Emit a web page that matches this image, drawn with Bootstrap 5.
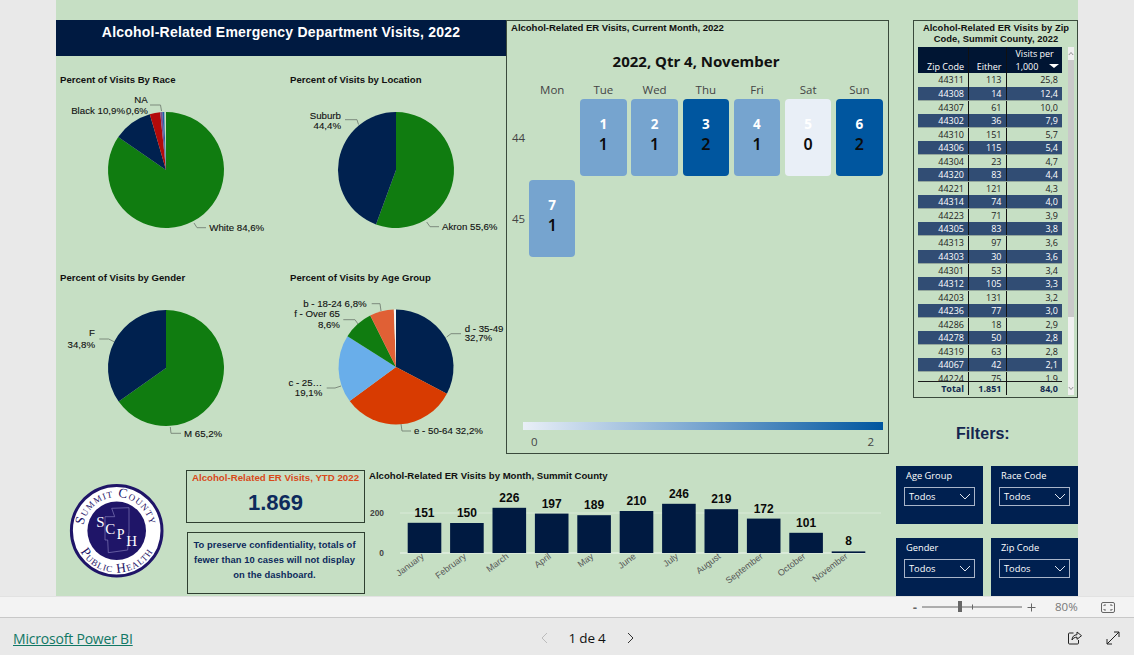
<!DOCTYPE html>
<html lang="en">
<head>
<meta charset="utf-8">
<title>Alcohol-Related Emergency Department Visits, 2022</title>
<link href="https://cdn.jsdelivr.net/npm/bootstrap@5.3.0/dist/css/bootstrap.min.css" rel="stylesheet">
<style>
html,body{height:655px;overflow:hidden;background:#e9e9e9}
body{font-family:"Liberation Sans",Arial,sans-serif;color:#000}
.stage{height:596px;overflow:hidden;padding-left:56px}
.report{width:1022px;height:596px;background:#c6dfc4;overflow:hidden}
.left-part{width:833px}
.upper-row{height:466px}
.left-col{width:450px;padding-top:20px}
.main-title{height:36px;background:#001a41;color:#fff;font-size:14px;font-weight:700;text-align:center;padding-top:3px;line-height:18px;letter-spacing:.22px}
.pie-row{height:198px}
.pie-cell{padding-top:17px}
.pie-a{width:230px}
.pie-b{width:220px}
.vis-title{font-size:9.6px;font-weight:700;line-height:12px;height:12px;padding:1px 0 0 4px;color:#111;white-space:nowrap}
.pie-svg{display:block;overflow:visible}
.pie-svg text{font-size:9.7px;fill:#111;stroke:#111;stroke-width:.12px;font-family:"Liberation Sans",Arial,sans-serif}
.pie-svg polyline{fill:none;stroke:#7d8b7d;stroke-width:1}
.cal-box{width:383px;height:434px;margin-top:20px;border:1px solid #3a4a3c;position:relative}
.cal-title{font-size:9.6px;font-weight:700;padding:1px 0 0 4px;line-height:12px;color:#111;letter-spacing:-.05px}
.cal-heading{font-family:"Noto Sans",sans-serif;font-size:15px;font-weight:700;text-align:center;line-height:20px;margin-top:17px;padding-right:3px;color:#111}
.cal-grid{display:grid;grid-template-columns:17.3px repeat(7,46.5px);column-gap:4.7px;grid-template-rows:20px 76.2px 76.2px;row-gap:4.8px;margin-top:3.700px;height:178px}
.wk-head{font-family:"Open Sans",sans-serif;font-size:11.5px;color:#444;text-align:center;line-height:20px;padding-top:5px;height:20px}
.wk-num{font-family:"Open Sans",sans-serif;font-size:11.5px;color:#444;padding-left:5px;align-self:center}
.day{border-radius:4px;display:flex;flex-direction:column;align-items:center;justify-content:center;font-weight:700;padding-bottom:7px}
.day-n{color:#fff;font-size:13.5px;line-height:20px;font-family:"Noto Sans",sans-serif}
.day-v{color:#0b0b0b;font-size:16px;line-height:20px;font-family:"Noto Sans",sans-serif;font-weight:600}
.lvl-1{background:#76a4cf}.lvl-2{background:#00569f}.lvl-0{background:#e9eff7}
.legend{position:absolute;left:16px;right:5px;top:401px}
.legend-bar{height:8px;background:linear-gradient(90deg,#e9eff7,#76a4cf 50%,#00569f)}
.legend-txt{font-family:"Open Sans",sans-serif;font-size:11.5px;color:#444;padding:4px 9px 0 8px;line-height:16px}
.lower-row{height:130px}
.logo-col{width:130px}
.logo-svg{display:block}
.kpi-col{width:179px}
.kpi-box{height:53px;margin-top:4px;border:1px solid #2e3f30;text-align:center}
.kpi-label{color:#d84a1a;font-size:9.7px;font-weight:700;line-height:12px;padding-top:1px;white-space:nowrap}
.kpi-value{color:#0d2a5c;font-size:22px;font-weight:700;line-height:26px;margin-top:6px}
.note-box{height:62px;margin:9px 0 0 1px;border:1px solid #2e3f30;color:#0d2a5c;font-size:9.4px;font-weight:700;line-height:15px;text-align:center;padding:4px 3px 0 0;letter-spacing:.07px}
.bar-col{width:524px}
.bar-title{font-size:9.6px;font-weight:700;line-height:20px;padding-left:4px;color:#111}
.bar-svg{display:block;overflow:visible}
.bar-svg .val{font-size:12px;font-weight:700;fill:#0a0a0a;text-anchor:middle}
.bar-svg .ax{font-size:8.4px;font-weight:700;fill:#444;text-anchor:end}
.bar-svg .mon{font-size:9px;fill:#555;text-anchor:end}
.right-part{width:189px}
.zip-box{width:165px;height:378px;margin:20px 0 0 24px;border:1px solid #3a4a3c;padding:0 3px 0 4px;background:#c6dfc4}
.zip-title{font-size:9.4px;font-weight:700;line-height:10.6px;text-align:center;padding-top:2px;height:26px;color:#111;letter-spacing:.05px}
.zip-main{width:144px}
.zip-scroll{height:334px;overflow:hidden}
.zip-tbl{width:144px;table-layout:fixed;border-collapse:collapse;font-family:"Open Sans",sans-serif;font-size:9px;--bs-table-bg:transparent;--bs-table-color:#222;margin:0}
.zip-tbl th,.zip-tbl td{padding:1px 4px 0 0;border:0;border-right:1px solid #111;text-align:right;line-height:12px;box-shadow:none;background:transparent;color:#222;font-weight:400}
.zip-tbl th:last-child,.zip-tbl td:last-child{border-right:0}
.zip-tbl thead th{background:#001533;color:#fff;height:26px;vertical-align:bottom;padding:0 4px 0 0;font-weight:400;white-space:nowrap}
.zip-tbl tbody tr{height:13.59px}
.zip-tbl tbody tr:nth-child(even) td{background:#314d74;color:#fff;border-bottom:1px solid #93a79c}
.zip-tbl .c1{width:50.5px}
.zip-tbl .c2{width:37.5px}
.zip-tbl .zip-head-3{text-align:left;padding:0 0 0 9px;line-height:12.5px}
.sort-tri{display:inline-block;width:0;height:0;border-left:5px solid transparent;border-right:5px solid transparent;border-top:4px solid #fff;margin-left:11px;vertical-align:2px}
.zip-total{border-top:1px solid #1b1b1b;height:13px}
.zip-total tbody tr{height:13px}
.zip-total td{font-weight:700!important;color:#13294f!important;line-height:11px}
.zip-bar{width:6px;margin-left:6px;height:348px;background:#f0f0f0}
.zip-arrow{height:13px;flex:none}
.zip-thumb{height:257px;background:#c9c9c9}
.filters-h{font-size:16px;font-weight:700;color:#14264f;padding-left:67px;line-height:20px;margin-top:26px;letter-spacing:.05px}
.filter-grid{display:grid;grid-template-columns:87px 87px;column-gap:8px;row-gap:14.5px;margin:22px 0 0 7px}
.filter-tile{height:57.5px;background:#002050;padding:4px 8px 0 8px;color:#fff;font-family:"Open Sans",sans-serif;font-size:9.3px}
.filter-name{line-height:12px;padding-left:2px;white-space:nowrap}
.filter-select{height:19px;margin-top:5px;border:1px solid #a9b5c9;padding:0 3px 0 4px;line-height:16px}
.status-bar{height:22px;background:#f3f3f3;border-top:1px solid #e2e2e2;border-bottom:1px solid #c8c8c8;padding-right:19px;color:#666}
.zoom-minus{font-size:13px;line-height:1;font-weight:700;color:#666;width:8px;margin-right:2px}
.zoom-pct{font-family:"Open Sans",sans-serif;font-size:11.5px;color:#777;width:23px;margin-left:19px}
.foot-bar{height:37px;background:#e9e9e9;padding:3px 14px 0 13px}
.foot-link{width:528px;font-family:"Open Sans",sans-serif;font-size:14px;letter-spacing:-.2px;color:#117865;text-decoration:underline}
.pager-txt{font-family:"Open Sans",sans-serif;font-size:13.5px;color:#111;width:38px;margin:0 20.5px;white-space:nowrap;letter-spacing:-.2px}
.svg-block{display:block;flex:none}
</style>
</head>
<body>
<div class="stage">
  <div class="report d-flex">
    <div class="left-part">
      <div class="upper-row d-flex">
        <div class="left-col">
          <div class="main-title">Alcohol-Related Emergency Department Visits, 2022</div>
          <div class="pie-row d-flex">
            <div class="pie-cell pie-a">
              <div class="vis-title">Percent of Visits By Race</div>
              <svg class="pie-svg" width="230" height="165" data-cy="85" data-r="58" data-pie="84.6:#107c10,10.9:#00214f,2.9:#b30a0a,0.6:#7a4f92,0.5:#1f5fa8,0.1:#8fa0a8">
                <polyline points="94,20 104.5,20 105.5,26"/><polyline points="70,29 73,30"/>
                <polyline points="138,138 141,142.7 150,142.7"/>
                <text x="85" y="18" text-anchor="middle">NA</text>
                <text x="69" y="29" text-anchor="end">Black 10,9%</text>
                <text x="92" y="29" text-anchor="end">0,6%</text>
                <text x="153.3" y="146">White 84,6%</text>
              </svg>
            </div>
            <div class="pie-cell pie-b">
              <div class="vis-title">Percent of Visits by Location</div>
              <svg class="pie-svg" width="220" height="165" data-cy="85" data-r="58" data-pie="55.6:#107c10,44.4:#00214f">
                <polyline points="59,34.7 71,34.7 72.5,39.5"/><polyline points="140.7,137 144,141.7 153,141.7"/>
                <text x="55" y="33.5" text-anchor="end">Suburb</text>
                <text x="55" y="43.5" text-anchor="end">44,4%</text>
                <text x="156" y="145">Akron 55,6%</text>
              </svg>
            </div>
          </div>
          <div class="pie-row d-flex">
            <div class="pie-cell pie-a">
              <div class="vis-title">Percent of Visits by Gender</div>
              <svg class="pie-svg" width="230" height="169" data-cy="85" data-r="58" data-pie="65.2:#107c10,34.8:#00214f">
                <polyline points="43.3,56 52.7,56 58,58.7"/><polyline points="114.3,144 115,150.3 125,150.3"/>
                <text x="39" y="53" text-anchor="end">F</text>
                <text x="39" y="64.5" text-anchor="end">34,8%</text>
                <text x="128" y="153.8">M 65,2%</text>
              </svg>
            </div>
            <div class="pie-cell pie-b">
              <div class="vis-title">Percent of Visits by Age Group</div>
              <svg class="pie-svg" width="220" height="169" data-cy="84" data-r="57.5" data-pie="32.7:#00214f,32.2:#d83b01,19.1:#69aeea,8.6:#107c10,6.8:#e06035,0.6:#f4f4f4">
                <polyline points="85.7,20.7 94,20.7 95,28"/><polyline points="57.3,36.7 69,36.7 72,41"/>
                <polyline points="40.7,105 49,105 55,103"/><polyline points="160.7,54 165,50.7 175,50.7"/>
                <polyline points="115,141 116,148 125,148"/>
                <text x="80.7" y="24" text-anchor="end">b - 18-24 6,8%</text>
                <text x="54" y="33.5" text-anchor="end">f - Over 65</text>
                <text x="54" y="44.5" text-anchor="end">8,6%</text>
                <text x="36.3" y="103" text-anchor="end">c - 25…</text>
                <text x="36.3" y="113" text-anchor="end">19,1%</text>
                <text x="178.7" y="49">d - 35-49</text>
                <text x="178.7" y="58">32,7%</text>
                <text x="128" y="151">e - 50-64 32,2%</text>
              </svg>
            </div>
          </div>
        </div>
        <div class="cal-box">
          <div class="cal-title">Alcohol-Related ER Visits, Current Month, 2022</div>
          <div class="cal-heading">2022, Qtr 4, November</div>
          <div class="cal-grid">
            <div></div>
            <div class="wk-head">Mon</div><div class="wk-head">Tue</div><div class="wk-head">Wed</div><div class="wk-head">Thu</div><div class="wk-head">Fri</div><div class="wk-head">Sat</div><div class="wk-head">Sun</div>
            <div class="wk-num">44</div>
            <div></div>
            <div class="day lvl-1"><span class="day-n">1</span><span class="day-v">1</span></div>
            <div class="day lvl-1"><span class="day-n">2</span><span class="day-v">1</span></div>
            <div class="day lvl-2"><span class="day-n">3</span><span class="day-v">2</span></div>
            <div class="day lvl-1"><span class="day-n">4</span><span class="day-v">1</span></div>
            <div class="day lvl-0"><span class="day-n">5</span><span class="day-v">0</span></div>
            <div class="day lvl-2"><span class="day-n">6</span><span class="day-v">2</span></div>
            <div class="wk-num">45</div>
            <div class="day lvl-1"><span class="day-n">7</span><span class="day-v">1</span></div>
          </div>
          <div class="legend">
            <div class="legend-bar"></div>
            <div class="legend-txt d-flex justify-content-between"><span>0</span><span>2</span></div>
          </div>
        </div>
      </div>
      <div class="lower-row d-flex">
        <div class="logo-col">
          <svg class="logo-svg" width="130" height="130" viewBox="0 0 130 130">
            <g transform="translate(60.7 64.7)">
              <circle r="45.3" fill="#fff" stroke="#1f1568" stroke-width="3"/>
              <circle r="29.3" fill="#1f1568"/>
              <polygon points="-5,-22.4 12.3,-23 12.3,1 11,19.3 -8.4,22 -9,9.3 -11.7,9.3 -11.7,-14 -2,-14" fill="none" stroke="#7f78b8" stroke-width=".7"/>
              <path id="arcTop" d="M-31.6,11.5 A33.6 33.6 0 1 1 31.6,11.5" fill="none"/>
              <path id="arcBot" d="M-40,-12 A41.8 41.8 0 1 0 40,-12" fill="none"/>
              <text font-family="Liberation Serif,serif" font-size="13.500" fill="#1f1568" style="font-variant:small-caps" letter-spacing=".9" text-anchor="middle"><textPath href="#arcTop" startOffset="50%">Summit County</textPath></text>
              <text font-family="Liberation Serif,serif" font-size="13.500" fill="#1f1568" style="font-variant:small-caps" letter-spacing=".9" text-anchor="middle"><textPath href="#arcBot" startOffset="50%">Public Health</textPath></text>
              <g font-family="Liberation Serif,serif" fill="#fff" text-anchor="middle" font-size="15">
                <text x="-16.2" y="-4">S</text><text x="-6.5" y="3.5">C</text><text x="4" y="8.5" font-size="14">P</text><text x="15" y="15">H</text>
              </g>
            </g>
          </svg>
        </div>
        <div class="kpi-col">
          <div class="kpi-box">
            <div class="kpi-label">Alcohol-Related ER Visits, YTD 2022</div>
            <div class="kpi-value">1.869</div>
          </div>
          <div class="note-box">To preserve confidentiality, totals of<br>fewer than 10 cases will not display<br>on the dashboard.</div>
        </div>
        <div class="bar-col">
          <div class="bar-title">Alcohol-Related ER Visits by Month, Summit County</div>
          <svg class="bar-svg" id="barChart" width="524" height="110"></svg>
        </div>
      </div>
    </div>
    <div class="right-part">
      <div class="zip-box">
        <div class="zip-title">Alcohol-Related ER Visits by Zip<br>Code, Summit County, 2022</div>
        <div class="d-flex">
          <div class="zip-main">
            <div class="zip-scroll">
              <table class="table zip-tbl">
                <colgroup><col class="c1"><col class="c2"><col></colgroup>
                <thead><tr><th>Zip Code</th><th>Either</th><th class="zip-head-3">Visits per<br>1,000<span class="sort-tri"></span></th></tr></thead>
                <tbody id="zipBody"></tbody>
              </table>
            </div>
            <table class="table zip-tbl zip-total">
              <colgroup><col class="c1"><col class="c2"><col></colgroup>
              <tbody><tr><td>Total</td><td>1.851</td><td>84,0</td></tr></tbody>
            </table>
          </div>
          <div class="zip-bar d-flex flex-column">
            <svg class="zip-arrow" width="6" height="13" viewBox="0 0 6 13"><path d="M.8 8 3 5.5 5.2 8" fill="none" stroke="#777" stroke-width=".8"/></svg>
            <div class="zip-thumb"></div>
            <div class="flex-grow-1"></div>
            <svg class="zip-arrow" width="6" height="13" viewBox="0 0 6 13"><path d="M.8 5 3 7.5 5.2 5" fill="none" stroke="#777" stroke-width=".8"/></svg>
          </div>
        </div>
      </div>
      <div class="filters-h">Filters:</div>
      <div class="filter-grid">
        <div class="filter-tile"><div class="filter-name">Age Group</div><div class="filter-select d-flex justify-content-between align-items-center"><span>Todos</span><svg width="12" height="7" viewBox="0 0 12 7"><path d="M1 1l5 5 5-5" fill="none" stroke="#dfe5ef" stroke-width="1"/></svg></div></div>
        <div class="filter-tile"><div class="filter-name">Race Code</div><div class="filter-select d-flex justify-content-between align-items-center"><span>Todos</span><svg width="12" height="7" viewBox="0 0 12 7"><path d="M1 1l5 5 5-5" fill="none" stroke="#dfe5ef" stroke-width="1"/></svg></div></div>
        <div class="filter-tile"><div class="filter-name">Gender</div><div class="filter-select d-flex justify-content-between align-items-center"><span>Todos</span><svg width="12" height="7" viewBox="0 0 12 7"><path d="M1 1l5 5 5-5" fill="none" stroke="#dfe5ef" stroke-width="1"/></svg></div></div>
        <div class="filter-tile"><div class="filter-name">Zip Code</div><div class="filter-select d-flex justify-content-between align-items-center"><span>Todos</span><svg width="12" height="7" viewBox="0 0 12 7"><path d="M1 1l5 5 5-5" fill="none" stroke="#dfe5ef" stroke-width="1"/></svg></div></div>
      </div>
    </div>
  </div>
</div>
<div class="status-bar d-flex align-items-center justify-content-end">
  <span class="zoom-minus text-center">-</span>
  <svg class="svg-block" width="102" height="14" viewBox="0 0 102 14"><path d="M1 7h100" stroke="#666" stroke-width="1"/><path d="M51.5 4.500v5" stroke="#666"/><rect x="37" y="1" width="4" height="11" fill="#666"/></svg>
  <svg class="svg-block ms-1" width="9" height="9" viewBox="0 0 9 9"><path d="M4.500 .5v8M.5 4.500h8" stroke="#666" stroke-width="1"/></svg>
  <span class="zoom-pct">80%</span>
  <svg class="svg-block" style="margin-left:23px" width="14" height="11" viewBox="0 0 14 11"><rect x=".5" y=".5" width="13" height="10" rx="1.500" fill="none" stroke="#666"/><path d="M3 4V3h2M9 3h2v1M3 7v1h2M9 8h2V7" fill="none" stroke="#666"/></svg>
</div>
<div class="foot-bar d-flex align-items-center">
  <a class="foot-link" href="#">Microsoft Power BI</a>
  <svg class="svg-block" width="7" height="12" viewBox="0 0 7 12"><path d="M6 1 1 6l5 5" fill="none" stroke="#bcbcbc" stroke-width="1"/></svg>
  <span class="pager-txt">1 de 4</span>
  <svg class="svg-block" width="7" height="12" viewBox="0 0 7 12"><path d="m1 1 5 5-5 5" fill="none" stroke="#333" stroke-width="1"/></svg>
  <div class="ms-auto d-flex align-items-center gap-4">
    <svg class="svg-block" width="14" height="14" viewBox="0 0 14 14"><path d="M5.500 2H1.500a1 1 0 0 0-1 1v9a1 1 0 0 0 1 1h8a1 1 0 0 0 1-1V9" fill="none" stroke="#222"/><path d="M9 1l4.500 3.700L9 8.300V6.200C6.500 6.200 5 7.200 4 9c0-3.200 2-5.200 5-5.300z" fill="none" stroke="#222"/></svg>
    <svg class="svg-block" width="14" height="14" viewBox="0 0 14 14"><path d="M1 13 13 1M8 1h5v5M1 8v5h5" fill="none" stroke="#222"/></svg>
  </div>
</div>
<script src="https://cdn.jsdelivr.net/npm/bootstrap@5.3.0/dist/js/bootstrap.bundle.min.js"></script>
<script>
var NS='http://www.w3.org/2000/svg';
function el(tag,attrs,txt){var e=document.createElementNS(NS,tag);for(var k in attrs)e.setAttribute(k,attrs[k]);if(txt!==undefined)e.textContent=txt;return e}
document.querySelectorAll('.pie-svg').forEach(function(svg){
  var cx=110,cy=+svg.dataset.cy,r=+svg.dataset.r,acc=0,first=svg.firstChild;
  svg.dataset.pie.split(',').forEach(function(s){
    var p=s.split(':'),v=+p[0],a0=acc/100*2*Math.PI,a1=(acc+v)/100*2*Math.PI;acc+=v;
    var d='M'+cx+' '+cy+'L'+(cx+r*Math.sin(a0)).toFixed(2)+' '+(cy-r*Math.cos(a0)).toFixed(2)+'A'+r+' '+r+' 0 '+(v>50?1:0)+' 1 '+(cx+r*Math.sin(a1)).toFixed(2)+' '+(cy-r*Math.cos(a1)).toFixed(2)+'Z';
    svg.insertBefore(el('path',{d:d,fill:p[1]}),first);
  });
});
var rows='44311 113 25,8|44308 14 12,4|44307 61 10,0|44302 36 7,9|44310 151 5,7|44306 115 5,4|44304 23 4,7|44320 83 4,4|44221 121 4,3|44314 74 4,0|44223 71 3,9|44305 83 3,8|44313 97 3,6|44303 30 3,6|44301 53 3,4|44312 105 3,3|44203 131 3,2|44236 77 3,0|44286 18 2,9|44278 50 2,8|44319 63 2,8|44067 42 2,1|44224 75 1,9'.split('|');
document.getElementById('zipBody').innerHTML=rows.map(function(r){return '<tr><td>'+r.split(' ').join('</td><td>')+'</td></tr>'}).join('');
var bc=document.getElementById('barChart');
bc.appendChild(el('line',{x1:35,x2:516,y1:27,y2:27,stroke:'#d9ead8','stroke-width':1}));
bc.appendChild(el('line',{x1:35,x2:500,y1:67,y2:67,stroke:'#eef6ee','stroke-width':1}));
bc.appendChild(el('text',{x:19,y:30,'class':'ax'},'200'));
bc.appendChild(el('text',{x:19,y:70,'class':'ax'},'0'));
[['January',151],['February',150],['March',226],['April',197],['May',189],['June',210],['July',246],['August',219],['September',172],['October',101],['November',8]].forEach(function(m,i){
  var x=42.7+i*42.4,h=m[1]*.2,c=x+16.8,lx=c,ly=71.5;
  bc.appendChild(el('rect',{x:x,y:67-h,width:33.6,height:h,fill:'#001a41'}));
  bc.appendChild(el('text',{x:c,y:67-h-6,'class':'val'},m[1]));
  bc.appendChild(el('text',{x:lx,y:ly,'class':'mon',transform:'rotate(-37 '+lx+' '+ly+')'},m[0]));
});
</script>
</body>
</html>
